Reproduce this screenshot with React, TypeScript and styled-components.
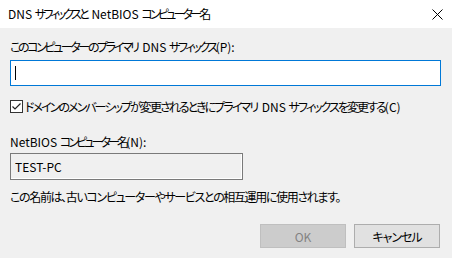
import styled, { createGlobalStyle } from 'styled-components';

const GlobalStyle = createGlobalStyle`
  html, body {
    margin: 0;
    padding: 0;
    background: #f0f0f0;
  }
  body {
    font-family: "Noto Sans CJK JP", "Noto Sans", sans-serif;
    font-size: 12px;
    color: #000;
  }
`;

// Latin runs keep their natural spacing; only kana/kanji get squeezed.
// $lead gives back the space the preceding kana's negative tracking eats.
const L = styled.span<{ $lead?: boolean }>`
  letter-spacing: 0;
  padding-left: ${({ $lead }) => ($lead ? '2px' : '0')};
`;

const Text = styled.span<{ $squeeze: number }>`
  font-feature-settings: "palt" 1;
  letter-spacing: ${({ $squeeze }) => -$squeeze}px;
  white-space: nowrap;
  line-height: 16px;
`;

const Window = styled.div`
  width: 452px;
  height: 258px;
  display: flex;
  flex-direction: column;
  background: #f0f0f0;
  overflow: hidden;
`;

const TitleBar = styled.div`
  height: 28px;
  flex: none;
  display: flex;
  align-items: center;
  justify-content: space-between;
  background: #fff;
  padding-left: 8px;
`;

const CloseButton = styled.button`
  width: 30px;
  height: 28px;
  border: none;
  background: transparent;
  display: flex;
  align-items: center;
  justify-content: center;
  padding: 0 0 0 1px;
`;

const Body = styled.div`
  display: flex;
  flex-direction: column;
  padding: 0 11px 0 10px;
`;

const Label = styled.label<{ $top: number }>`
  display: block;
  margin-top: ${({ $top }) => $top}px;
  line-height: 16px;
`;

const TextInput = styled.div`
  margin-top: 5px;
  height: 26px;
  box-sizing: border-box;
  border: 1px solid #0078d7;
  background: #fff;
  display: flex;
  align-items: center;
  padding-left: 4px;
`;

const Caret = styled.span`
  width: 1px;
  height: 14px;
  background: #000;
`;

const CheckRow = styled.div`
  margin-top: 14px;
  display: flex;
  align-items: center;
  gap: 2px;
  height: 13px;
`;

const CheckBox = styled.span`
  width: 13px;
  height: 13px;
  box-sizing: border-box;
  border: 1px solid #333;
  background: #fff;
  display: flex;
  align-items: center;
  justify-content: center;
  flex: none;
`;

const ReadonlyField = styled.div`
  margin-top: 3px;
  width: 233px;
  height: 27px;
  box-sizing: border-box;
  border: 1px solid #7a7a7a;
  box-shadow: inset -1px -1px 0 #fff;
  display: flex;
  align-items: center;
  padding-left: 4px;
`;

const Note = styled.p`
  margin: 9px 0 0;
  line-height: 16px;
`;

const ButtonRow = styled.div`
  margin-top: 19px;
  display: flex;
  justify-content: flex-end;
  gap: 8px;
  padding-right: 1px;
`;

const DialogButton = styled.button<{ $disabled?: boolean }>`
  width: 86px;
  height: 24px;
  box-sizing: border-box;
  font: inherit;
  padding: 0;
  border: 1px solid ${({ $disabled }) => ($disabled ? '#bfbfbf' : '#adadad')};
  background: ${({ $disabled }) => ($disabled ? '#cccccc' : '#e1e1e1')};
  color: ${({ $disabled }) => ($disabled ? '#838383' : '#000')};
`;

const CloseIcon = () => (
  <svg width="11" height="11" viewBox="0 0 11 11" aria-hidden="true">
    <path d="M0.5 0.5L10.5 10.5M10.5 0.5L0.5 10.5" stroke="#000" strokeWidth="1" fill="none" />
  </svg>
);

const CheckMark = () => (
  <svg width="11" height="11" viewBox="0 0 11 11" aria-hidden="true">
    <path d="M1.5 5.5L4 8L9.5 2.5" stroke="#222" strokeWidth="1.2" fill="none" />
  </svg>
);

const App = () => (
  <>
    <GlobalStyle />
    <Window>
      <TitleBar>
        <Text $squeeze={2.8}>
          <L>DNS </L>サフィックスと<L $lead> NetBIOS </L>コンピューター名
        </Text>
        <CloseButton type="button" aria-label="閉じる">
          <CloseIcon />
        </CloseButton>
      </TitleBar>
      <Body>
        <Label $top={11}>
          <Text $squeeze={2.4}>
            このコンピューターのプライマリ<L $lead> DNS </L>サフィックス<L>(P):</L>
          </Text>
        </Label>
        <TextInput>
          <Caret />
        </TextInput>
        <CheckRow>
          <CheckBox>
            <CheckMark />
          </CheckBox>
          <Text $squeeze={1.95}>
            ドメインのメンバーシップが変更されるときにプライマリ<L $lead> DNS </L>サフィックスを変更する<L>(C)</L>
          </Text>
        </CheckRow>
        <Label $top={21}>
          <Text $squeeze={2.9}>
            <L>NetBIOS </L>コンピューター名<L>(N):</L>
          </Text>
        </Label>
        <ReadonlyField>TEST-PC</ReadonlyField>
        <Note>
          <Text $squeeze={1.35}>この名前は、古いコンピューターやサービスとの相互運用に使用されます。</Text>
        </Note>
        <ButtonRow>
          <DialogButton type="button" $disabled disabled>
            OK
          </DialogButton>
          <DialogButton type="button">
            <Text $squeeze={1}>キャンセル</Text>
          </DialogButton>
        </ButtonRow>
      </Body>
    </Window>
  </>
);

export default App;
